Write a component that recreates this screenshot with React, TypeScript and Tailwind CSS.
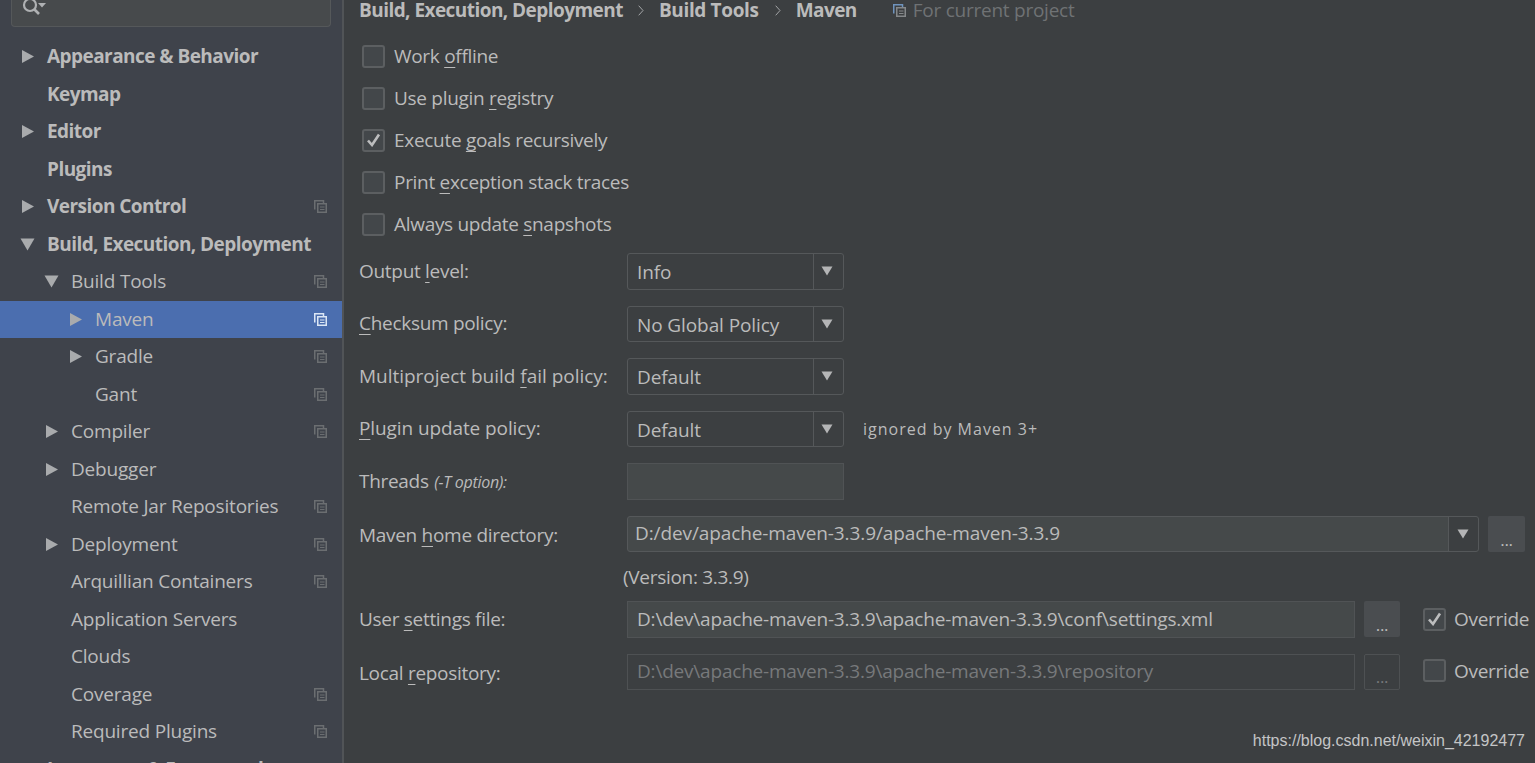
import React from "react";

const font = { fontFamily: '"Open Sans", "Noto Sans", sans-serif' };

function Tri({ down = false }: { down?: boolean }) {
  return down ? (
    <svg width="15" height="13" viewBox="0 0 15 13" className="shrink-0 -ml-[2px]">
      <polygon points="0.5,0.5 14.5,0.5 7.5,12.5" fill="#a9abad" />
    </svg>
  ) : (
    <svg width="12" height="13" viewBox="0 0 12 13" className="shrink-0">
      <polygon points="0,0 12,6.5 0,13" fill="#a9abad" />
    </svg>
  );
}

function ScopeIcon({ active = false, back, front }: { active?: boolean; back?: string; front?: string }) {
  const b = back ?? (active ? "#dbe6f5" : "#6b6e71");
  const f = front ?? b;
  return (
    <svg width="13" height="13" viewBox="0 0 13 13" className="shrink-0">
      <path d="M0.75 9.5V0.75H9.5V3" fill="none" stroke={b} strokeWidth="1.5" />
      <rect x="3.75" y="3.75" width="8.5" height="8.5" fill="none" stroke={f} strokeWidth="1.5" />
      <path d="M6 7H10.5M6 9.5H10.5" stroke={f} strokeWidth="1.2" />
    </svg>
  );
}

function Chevron() {
  return (
    <svg width="6" height="11" viewBox="0 0 6 11" className="shrink-0">
      <path d="M0.7 0.7L5 5.5L0.7 10.3" fill="none" stroke="#a3a5a7" strokeWidth="1" />
    </svg>
  );
}

type Item = { t: string; l: number; a?: "r" | "d"; b?: boolean; s?: boolean; sel?: boolean };
const items: Item[] = [
  { t: "Appearance & Behavior", l: 0, a: "r", b: true },
  { t: "Keymap", l: 0, b: true },
  { t: "Editor", l: 0, a: "r", b: true },
  { t: "Plugins", l: 0, b: true },
  { t: "Version Control", l: 0, a: "r", b: true, s: true },
  { t: "Build, Execution, Deployment", l: 0, a: "d", b: true },
  { t: "Build Tools", l: 1, a: "d", s: true },
  { t: "Maven", l: 2, a: "r", s: true, sel: true },
  { t: "Gradle", l: 2, a: "r", s: true },
  { t: "Gant", l: 2, s: true },
  { t: "Compiler", l: 1, a: "r", s: true },
  { t: "Debugger", l: 1, a: "r" },
  { t: "Remote Jar Repositories", l: 1, s: true },
  { t: "Deployment", l: 1, a: "r", s: true },
  { t: "Arquillian Containers", l: 1, s: true },
  { t: "Application Servers", l: 1 },
  { t: "Clouds", l: 1 },
  { t: "Coverage", l: 1, s: true },
  { t: "Required Plugins", l: 1, s: true },
  { t: "Languages & Frameworks", l: 0, a: "r", b: true },
];

const indent: Record<number, string> = { 0: "pl-[22px]", 1: "pl-[46px]", 2: "pl-[70px]" };

function Row({ it }: { it: Item }) {
  return (
    <div className={`h-[37.5px] shrink-0 flex items-center pr-[15px] pb-[0.5px] ${indent[it.l]} ${it.sel ? "bg-[#4b6eaf]" : ""}`}>
      <span className="w-[25px] shrink-0 flex items-center">{it.a && <Tri down={it.a === "d"} />}</span>
      <span className={`flex-1 whitespace-nowrap text-[19px] text-[#bbbbbb] ${it.b ? "font-bold tracking-[-0.55px]" : "tracking-[-0.2px]"}`}>{it.t}</span>
      {it.s && <ScopeIcon active={it.sel} />}
    </div>
  );
}

function Check({ on = false }: { on?: boolean }) {
  return (
    <span className="w-[23px] h-[23px] shrink-0 rounded-[3px] border-2 border-[#5c5f61] bg-[#43474a] flex items-center justify-center">
      {on && (
        <svg width="15" height="14" viewBox="0 0 15 14">
          <path d="M2 7.5L6 12L13 1.5" fill="none" stroke="#bcbdbe" strokeWidth="2.6" />
        </svg>
      )}
    </span>
  );
}

function Lbl({ pre, u, post }: { pre?: string; u?: string; post?: string }) {
  return (
    <>
      {pre}
      <span className="underline underline-offset-[4px] decoration-1 [text-decoration-skip-ink:none]">{u}</span>
      {post}
    </>
  );
}

function CheckRow({ on, children }: { on?: boolean; children: React.ReactNode }) {
  return (
    <div className="h-[42px] flex items-center gap-[9px] pl-[3px]">
      <Check on={on} />
      <span>{children}</span>
    </div>
  );
}

function Arrow() {
  return (
    <svg width="12" height="10" viewBox="0 0 12 10">
      <polygon points="0.5,0.5 11.5,0.5 6,9.5" fill="#b4b5b6" />
    </svg>
  );
}

function Combo({ v, cls = "pt-[1px]" }: { v: string; cls?: string }) {
  return (
    <div className="w-[217px] h-[36.5px] shrink-0 rounded-[3px] border border-[#55585a] flex items-center">
      <span className={`flex-1 pl-[9px] tracking-[-0.1px] ${cls}`}>{v}</span>
      <span className="w-[23px] h-full border-l border-[#55585a] mr-[7px] pl-[7px] flex items-center justify-start"><Arrow /></span>
    </div>
  );
}

function FormRow({ children }: { children: React.ReactNode }) {
  return <div className="h-[36.5px] mb-[16px] flex items-center">{children}</div>;
}

function L({ children, cls = "" }: { children: React.ReactNode; cls?: string }) {
  return <div className={`w-[268px] shrink-0 ${cls}`}>{children}</div>;
}

function Dots({ disabled = false, w = "w-[36px]" }: { disabled?: boolean; w?: string }) {
  return (
    <div className={`${w} h-[36.5px] shrink-0 rounded-[2px] flex items-end justify-center pb-[4px] leading-none text-[17px] ${disabled ? "border border-[#4e5153] text-[#77797b]" : "bg-[#4a4d50] text-[#bbbbbb]"}`}>...</div>
  );
}

export default function App() {
  return (
    <div className="h-[763px] w-[1535px] overflow-hidden flex bg-[#3c3f41] text-[#bbbbbb] text-[19px] tracking-[-0.3px]" style={font}>
      <aside className="w-[344px] shrink-0 bg-[#3f434b] border-r-2 border-[#515457] flex flex-col overflow-hidden">
        <div className="h-[38px] shrink-0 pl-[11px] pr-[11px] pb-[11px]">
          <div className="h-full rounded-b-[4px] border border-t-0 border-[#55585a] bg-[#474a4c] pl-[8px] flex items-start">
            <svg width="30" height="20" viewBox="0 0 30 20" className="-mt-[2px]">
              <circle cx="10" cy="7" r="6" fill="none" stroke="#afb1b3" strokeWidth="2.2" />
              <path d="M14 11L19 16" stroke="#afb1b3" strokeWidth="2.6" />
              <polygon points="18,5 26,5 22,9.5" fill="#afb1b3" />
            </svg>
          </div>
        </div>
        <div className="flex flex-col">
          {items.map((it) => (
            <Row key={it.t} it={it} />
          ))}
        </div>
      </aside>
      <main className="flex-1 pl-[15px] pr-[10px] min-w-0 relative">
        <div className="h-[21px] leading-[21px] flex items-center whitespace-nowrap font-bold tracking-[-0.55px]">
          <span>Build, Execution, Deployment</span>
          <span className="ml-[15px] mr-[15px]"><Chevron /></span>
          <span className="tracking-[-0.35px]">Build Tools</span>
          <span className="ml-[16px] mr-[15px]"><Chevron /></span>
          <span>Maven</span>
          <span className="ml-[36px] mr-[7px]"><ScopeIcon back="#6f93bd" front="#85888a" /></span>
          <span className="font-normal text-[#6f7274] tracking-[-0.25px]">For current project</span>
        </div>
        <div className="mt-[14px] mb-[8px] whitespace-nowrap">
          <CheckRow><Lbl pre="Work " u="o" post="ffline" /></CheckRow>
          <CheckRow><Lbl pre="Use plugin " u="r" post="egistry" /></CheckRow>
          <CheckRow on><Lbl pre="Execute " u="g" post="oals recursively" /></CheckRow>
          <CheckRow><Lbl pre="Print " u="e" post="xception stack traces" /></CheckRow>
          <CheckRow><Lbl pre="Always update " u="s" post="napshots" /></CheckRow>
        </div>
        <FormRow><L><Lbl pre="Output " u="l" post="evel:" /></L><Combo v="Info" /></FormRow>
        <FormRow><L cls="-mt-[2px]"><Lbl u="C" post="hecksum policy:" /></L><Combo v="No Global Policy" cls="pt-[2px]" /></FormRow>
        <FormRow><L cls="tracking-[-0.02px]"><Lbl pre="Multiproject build " u="f" post="ail policy:" /></L><Combo v="Default" /></FormRow>
        <FormRow>
          <L cls="-mt-[2px] tracking-[-0.1px]"><Lbl u="P" post="lugin update policy:" /></L><Combo v="Default" cls="pt-[3px]" />
          <span className="ml-[19px] text-[16px] tracking-[1px]">ignored by Maven 3+</span>
        </FormRow>
        <FormRow>
          <L>Threads <i className="text-[16px] ml-[1px]">(-T option):</i></L>
          <div className="w-[217px] h-[36.5px] shrink-0 border border-[#505355] bg-[#45494a]" />
        </FormRow>
        <div className="h-[36.5px] flex items-center">
          <L cls="mt-[2px]"><Lbl pre="Maven " u="h" post="ome directory:" /></L>
          <div className="w-[852px] h-full shrink-0 rounded-[3px] border border-[#55585a] bg-[#45494a] flex items-center">
            <span className="flex-1 pl-[7px] -mt-[1px] tracking-[-0.1px]">D:/dev/apache-maven-3.3.9/apache-maven-3.3.9</span>
            <span className="w-[30px] h-full border-l border-[#55585a] bg-[#3c3f41] pl-[8px] rounded-r-[3px] flex items-center"><Arrow /></span>
          </div>
          <div className="ml-[9px]"><Dots w="w-[37px]" /></div>
        </div>
        <div className="h-[48.5px] pt-[1px] pl-[264px] flex items-center">(Version: 3.3.9)</div>
        <div className="h-[37px] mb-[16px] flex items-center">
          <L cls="mt-[1px]"><Lbl pre="User " u="s" post="ettings file:" /></L>
          <div className="w-[728px] h-full shrink-0 border border-[#505355] bg-[#45494a] pl-[9px] flex items-center tracking-[-0.2px]">D:\dev\apache-maven-3.3.9\apache-maven-3.3.9\conf\settings.xml</div>
          <div className="ml-[9px]"><Dots /></div>
          <div className="ml-[24px] flex items-center gap-[8px] -translate-x-px"><Check on /><span>Override</span></div>
        </div>
        <div className="h-[36.5px] flex items-center">
          <L cls="mt-[2px]"><Lbl pre="Local " u="r" post="epository:" /></L>
          <div className="w-[728px] h-full shrink-0 border border-[#4e5153] pl-[9px] pb-[2px] flex items-center text-[#77797b] tracking-[-0.2px]">D:\dev\apache-maven-3.3.9\apache-maven-3.3.9\repository</div>
          <div className="ml-[9px]"><Dots disabled /></div>
          <div className="ml-[24px] flex items-center gap-[8px] -translate-x-px pb-[2px]"><Check /><span>Override</span></div>
        </div>
        <div className="absolute right-[10px] bottom-[10px] text-[16px] tracking-[0] text-[#c4c5c6]" style={{ fontFamily: '"Liberation Sans", Arial, sans-serif' }}>https://blog.csdn.net/weixin_42192477</div>
      </main>
    </div>
  );
}
